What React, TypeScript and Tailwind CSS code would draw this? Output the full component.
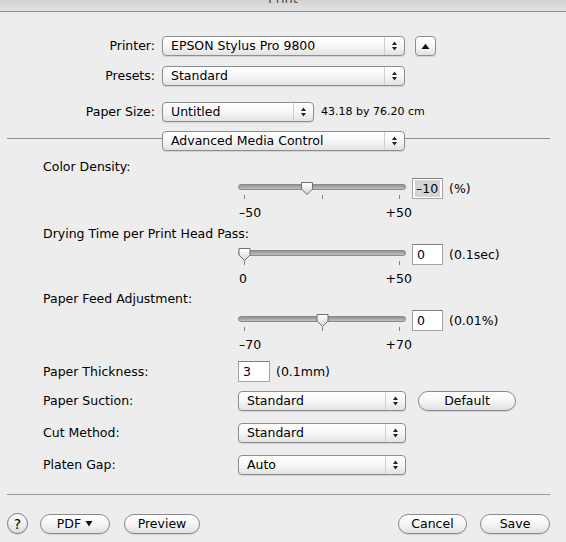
import React from "react";

const font = { fontFamily: '"DejaVu Sans", "Liberation Sans", sans-serif' };

function Arrows() {
  return (
    <svg width="7" height="12" viewBox="0 0 7 12" className="block">
      <path d="M1 5 L3.5 1.5 L6 5 Z" fill="#222" />
      <path d="M1 7 L6 7 L3.5 10.5 Z" fill="#222" />
    </svg>
  );
}

function Popup({ className, label }: { className: string; label: string }) {
  return (
    <div
      className={
        "flex h-[20px] items-stretch rounded-[4px] border border-[#8e8e8e] bg-gradient-to-b from-white via-[#f7f7f7] to-[#e2e2e2] shadow-[0_1px_1px_rgba(0,0,0,0.12)] " +
        className
      }
    >
      <span className="flex flex-1 items-center overflow-hidden whitespace-nowrap pl-[8px] text-[12.5px] leading-[16px] text-black">
        {label}
      </span>
      <span className="flex w-[20px] items-center justify-center border-l border-[#cfcfcf]">
        <Arrows />
      </span>
    </div>
  );
}

function Pill({ className, children }: { className: string; children: React.ReactNode }) {
  return (
    <div
      className={
        "flex h-[20px] items-center justify-center rounded-full border border-[#8a8a8a] bg-gradient-to-b from-white via-[#f6f6f6] to-[#e0e0e0] text-[12.5px] leading-[16px] text-black shadow-[0_1px_1px_rgba(0,0,0,0.12)] " +
        className
      }
    >
      {children}
    </div>
  );
}

function Field({ value, selected }: { value: string; selected?: boolean }) {
  return (
    <div className="flex h-[21px] w-[31px] items-center border border-[#a3a3a3] border-t-[#7f7f7f] bg-white px-[2px]">
      {selected ? (
        <span className="flex h-[17px] w-full items-center bg-[#d4d4d4] pl-[1px] text-[12.5px] leading-[16px] text-black">
          {value}
        </span>
      ) : (
        <span className="pl-[2px] text-[12.5px] leading-[16px] text-black">{value}</span>
      )}
    </div>
  );
}

function Slider({ thumb, ticks }: { thumb: number; ticks: number[] }) {
  return (
    <svg width="168" height="22" viewBox="0 0 168 22" className="block shrink-0">
      <defs>
        <linearGradient id="trk" x1="0" y1="0" x2="0" y2="1">
          <stop offset="0" stopColor="#8c8c8c" />
          <stop offset="0.5" stopColor="#a9a9a9" />
          <stop offset="1" stopColor="#c4c4c4" />
        </linearGradient>
        <linearGradient id="thm" x1="0" y1="0" x2="0" y2="1">
          <stop offset="0" stopColor="#ffffff" />
          <stop offset="1" stopColor="#d6d6d6" />
        </linearGradient>
      </defs>
      <rect x="0.5" y="6.5" width="167" height="5" rx="2.5" fill="url(#trk)" stroke="#8a8a8a" />
      {ticks.map((t) => (
        <line key={t} x1={t + 0.5} x2={t + 0.5} y1="17" y2="21" stroke="#858585" strokeWidth="1" />
      ))}
      <path
        d={`M${thumb - 5.5} 4.5 h11 v6.5 l-5.5 5.5 l-5.5 -5.5 z`}
        fill="url(#thm)"
        stroke="#707070"
        strokeLinejoin="round"
      />
    </svg>
  );
}

function SliderRow({
  thumb,
  ticks,
  value,
  unit,
  selected,
}: {
  thumb: number;
  ticks: number[];
  value: string;
  unit: string;
  selected?: boolean;
}) {
  return (
    <div className="flex items-start pl-[195px]">
      <Slider thumb={thumb} ticks={ticks} />
      <div className="ml-[6px]">
        <Field value={value} selected={selected} />
      </div>
      <span className="ml-[6px] mt-[3px] text-[12.5px] leading-[16px] text-black">{unit}</span>
    </div>
  );
}

function Scale({ min, max }: { min: string; max: string }) {
  return (
    <div className="flex w-[369px] justify-between pl-[196px] text-[12.5px] leading-[16px] text-black">
      <span>{min}</span>
      <span>{max}</span>
    </div>
  );
}

function Label({ children }: { children: React.ReactNode }) {
  return <div className="text-[12.5px] leading-[16px] text-black">{children}</div>;
}

export default function App() {
  return (
    <div className="h-[542px] w-[566px] overflow-hidden bg-[#ededed]" style={font}>
      {/* title bar */}
      <div className="flex h-[12px] justify-center overflow-hidden border-b border-[#8f8f8f] bg-gradient-to-b from-[#d2d2d2] to-[#e2e2e2]">
        <span className="-mt-[9px] text-[13px] leading-[16px] text-[#4d4d4d]">Print</span>
      </div>

      {/* top section */}
      <div className="flex flex-col pt-[24px]">
        <div className="flex items-center">
          <span className="w-[155px] text-right text-[12.5px] leading-[16px] text-black">Printer:</span>
          <Popup className="ml-[7px] w-[243px]" label="EPSON Stylus Pro 9800" />
          <div className="ml-[10px] flex h-[20px] w-[21px] items-center justify-center rounded-[4px] border border-[#8e8e8e] bg-gradient-to-b from-white via-[#f7f7f7] to-[#e2e2e2] shadow-[0_1px_1px_rgba(0,0,0,0.12)]">
            <svg width="9" height="7" viewBox="0 0 9 7" className="block">
              <path d="M0.5 6 L4.5 0.8 L8.5 6 Z" fill="#111" />
            </svg>
          </div>
        </div>
        <div className="mt-[10px] flex items-center">
          <span className="w-[155px] text-right text-[12.5px] leading-[16px] text-black">Presets:</span>
          <Popup className="ml-[7px] w-[243px]" label="Standard" />
        </div>
        <div className="mt-[16px] flex items-center">
          <span className="w-[155px] text-right text-[12.5px] leading-[16px] text-black">Paper Size:</span>
          <Popup className="ml-[7px] w-[152px]" label="Untitled" />
          <span className="ml-[7px] text-[11px] leading-[14px] text-black">43.18 by 76.20 cm</span>
        </div>
        <div className="mt-[9px] flex items-start pl-[7px]">
          <div className="mt-[7px] h-px w-[155px] bg-[#8e8e8e]" />
          <Popup className="w-[243px]" label="Advanced Media Control" />
          <div className="mt-[7px] h-px w-[145px] bg-[#8e8e8e]" />
        </div>
      </div>

      {/* advanced media control */}
      <div className="flex flex-col pl-[43px]">
        <div className="mt-[8px]">
          <Label>Color Density:</Label>
        </div>
        <div className="mt-[3px]">
          <SliderRow thumb={69} ticks={[6, 84, 161]} value="–10" unit="(%)" selected />
        </div>
        <div className="mt-[5px]">
          <Scale min="–50" max="+50" />
        </div>
        <div className="mt-[5px]">
          <Label>Drying Time per Print Head Pass:</Label>
        </div>
        <div className="mt-[2px]">
          <SliderRow thumb={6.5} ticks={[6, 161]} value="0" unit="(0.1sec)" />
        </div>
        <div className="mt-[5px]">
          <Scale min="0" max="+50" />
        </div>
        <div className="mt-[4px]">
          <Label>Paper Feed Adjustment:</Label>
        </div>
        <div className="mt-[3px]">
          <SliderRow thumb={84.5} ticks={[6, 84, 161]} value="0" unit="(0.01%)" />
        </div>
        <div className="mt-[5px]">
          <Scale min="–70" max="+70" />
        </div>

        <div className="mt-[8px] flex items-center">
          <div className="w-[195px]">
            <Label>Paper Thickness:</Label>
          </div>
          <div className="flex h-[21px] w-[32px] items-center border border-[#a3a3a3] border-t-[#7f7f7f] bg-white pl-[4px] text-[12.5px] leading-[16px] text-black">
            3
          </div>
          <span className="ml-[6px] text-[12.5px] leading-[16px] text-black">(0.1mm)</span>
        </div>
        <div className="mt-[9px] flex items-center">
          <div className="w-[195px]">
            <Label>Paper Suction:</Label>
          </div>
          <Popup className="w-[168px]" label="Standard" />
          <Pill className="ml-[12px] w-[98px]">Default</Pill>
        </div>
        <div className="mt-[12px] flex items-center">
          <div className="w-[195px]">
            <Label>Cut Method:</Label>
          </div>
          <Popup className="w-[168px]" label="Standard" />
        </div>
        <div className="mt-[12px] flex items-center">
          <div className="w-[195px]">
            <Label>Platen Gap:</Label>
          </div>
          <Popup className="w-[168px]" label="Auto" />
        </div>
      </div>

      {/* bottom */}
      <div className="ml-[7px] mt-[19px] h-px w-[543px] bg-[#9a9a9a]" />
      <div className="mt-[18px] flex items-center pl-[7px] pr-[16px]">
        <div className="flex h-[21px] w-[21px] items-center justify-center rounded-full border border-[#7a7a7a] bg-gradient-to-b from-white to-[#dedede] text-[14px] font-medium leading-[16px] text-black shadow-[0_1px_1px_rgba(0,0,0,0.12)]">
          ?
        </div>
        <Pill className="ml-[12px] w-[70px]">
          <span>PDF</span>
          <svg width="8" height="7" viewBox="0 0 8 7" className="ml-[4px] block">
            <path d="M0.5 1 L7.5 1 L4 6.5 Z" fill="#111" />
          </svg>
        </Pill>
        <Pill className="ml-[14px] w-[76px]">Preview</Pill>
        <div className="flex-1" />
        <Pill className="w-[69px]">Cancel</Pill>
        <Pill className="ml-[13px] w-[70px]">Save</Pill>
      </div>
    </div>
  );
}
